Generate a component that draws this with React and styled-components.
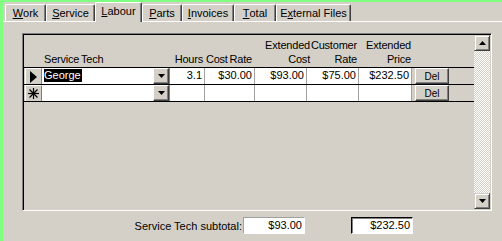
import React from 'react';
import styled, { createGlobalStyle } from 'styled-components';

const Global = createGlobalStyle`
  html, body { margin: 0; padding: 0; background: #d4d0c8; }
  body { font-family: "Liberation Sans", Arial, sans-serif; font-size: 11px; color: #000; }
`;

const Window = styled.div`
  width: 499px;
  height: 239px;
  border-left: 3px solid #80ff80;
  border-top: 2px solid #80ff80;
  background: #d4d0c8;
  display: flex;
  flex-direction: column;
  overflow: hidden;
`;

const TabStrip = styled.div`
  display: flex;
  align-items: flex-end;
  height: 19px;
  padding-left: 2px;
  position: relative;
  z-index: 1;
`;

const Tab = styled.div`
  box-sizing: border-box;
  width: ${p => p.$w}px;
  height: ${p => (p.$active ? 20 : 17)}px;
  margin-bottom: ${p => (p.$active ? -1 : 0)}px;
  padding-bottom: ${p => (p.$active ? 4 : 1)}px;
  background: #d4d0c8;
  border-top: 1px solid #fff;
  border-left: 1px solid #fff;
  border-right: 1px solid #404040;
  box-shadow: inset -1px 0 #808080;
  border-radius: 2px 2px 0 0;
  display: flex;
  align-items: center;
  justify-content: center;
  white-space: nowrap;
  position: relative;
  z-index: ${p => (p.$active ? 2 : 1)};
  u { text-decoration: underline; text-underline-offset: 1px; }
`;

const Body = styled.div`
  flex: 1;
  border-top: 1px solid #fff;
  padding: 11px 0 0 19px;
  display: flex;
  flex-direction: column;
`;

const Subform = styled.div`
  box-sizing: border-box;
  width: 470px;
  height: 178px;
  border: 1px solid;
  border-color: #808080 #fff #fff #808080;
  box-shadow: inset 1px 1px #000, inset -1px -1px #d4d0c8;
  padding: 1px;
  display: flex;
`;

const Sheet = styled.div`
  flex: 1;
  display: flex;
  flex-direction: column;
`;

const Header = styled.div`
  box-sizing: border-box;
  height: 32px;
  display: flex;
  align-items: flex-end;
  padding-bottom: 1px;
  letter-spacing: -0.2px;
  word-spacing: -1px;
`;

const HeadCell = styled.div`
  width: ${p => p.$w}px;
  flex: none;
  display: flex;
  flex-direction: column;
  align-items: ${p => (p.$left ? 'flex-start' : 'flex-end')};
  line-height: 14px;
  white-space: nowrap;
`;

const Rows = styled.div`
  border-bottom: 1px solid #000;
`;

const Row = styled.div`
  display: flex;
  height: 16px;
  border-top: 1px solid #000;
  padding-left: 1px;
`;

const Selector = styled.div`
  box-sizing: border-box;
  width: 17px;
  flex: none;
  background: #d4d0c8;
  border-top: 1px solid #fff;
  border-left: 1px solid #fff;
  border-right: 1px solid #808080;
  display: flex;
  align-items: center;
  justify-content: center;
`;

const Field = styled.div`
  box-sizing: border-box;
  width: ${p => p.$w}px;
  flex: none;
  background: #fff;
  border-right: 1px solid #a0a0a0;
  text-align: ${p => (p.$left ? 'left' : 'right')};
  padding: 0 2px;
  line-height: 15px;
  white-space: nowrap;
  overflow: hidden;
`;

const Combo = styled.div`
  box-sizing: border-box;
  width: 128px;
  flex: none;
  display: flex;
  background: #fff;
  border-right: 1px solid #808080;
`;

const ComboText = styled.div`
  flex: 1;
  padding: 1px 0 0 2px;
  line-height: 13px;
`;

const Highlight = styled.span`
  background: #000;
  color: #fff;
  padding: 0 1px 0 0;
  display: inline-block;
`;

const RaisedButton = styled.div`
  box-sizing: border-box;
  background: #d4d0c8;
  border: 1px solid;
  border-color: #fff #404040 #404040 #fff;
  box-shadow: inset -1px -1px #808080;
  display: flex;
  align-items: center;
  justify-content: center;
  flex: none;
`;

const DropButton = styled(RaisedButton)`
  width: 16px;
  height: 16px;
`;

const Gap = styled.div`
  width: ${p => p.$w}px;
  flex: none;
`;

const DelButton = styled(RaisedButton)`
  width: 34px;
  height: 16px;
  font-size: 10px;
`;

const ScrollBar = styled.div`
  width: 16px;
  flex: none;
  display: flex;
  flex-direction: column;
`;

const ScrollButton = styled(RaisedButton)`
  width: 16px;
  height: 16px;
  border-color: #d4d0c8 #404040 #404040 #d4d0c8;
  box-shadow: inset 1px 1px #fff, inset -1px -1px #808080;
`;

const Track = styled.div`
  flex: 1;
  background: repeating-conic-gradient(#fff 0 25%, #d4d0c8 0 50%) 0 0 / 2px 2px;
`;

const SubtotalRow = styled.div`
  display: flex;
  align-items: center;
  margin-top: 6px;
  height: 17px;
`;

const SubLabel = styled.div`
  width: 221px;
  text-align: right;
  padding-right: 1px;
  box-sizing: border-box;
  white-space: nowrap;
`;

const TotalBox = styled.div`
  box-sizing: border-box;
  width: 62px;
  height: 17px;
  background: #fff;
  text-align: right;
  padding-right: 2px;
  line-height: 15px;
  margin-left: ${p => p.$ml || 0}px;
  border: 1px solid;
  ${p => p.$sunken
    ? 'border-color: #000 #fff #fff #000; box-shadow: inset 1px 1px #808080;'
    : 'border-color: #a0a0a0 #fff #fff #a0a0a0;'}
`;

const Arrow = ({ dir }) => {
  const pts = {
    down: '0,0 7,0 3.5,4',
    up: '0,4 7,4 3.5,0',
  }[dir];
  return (
    <svg width="7" height="4" viewBox="0 0 7 4" style={{ display: 'block' }}>
      <polygon points={pts} fill="#000" />
    </svg>
  );
};

const Pointer = () => (
  <svg width="7" height="12" viewBox="0 0 7 12" style={{ display: 'block' }}>
    <polygon points="0,0 7,6 0,12" fill="#000" />
  </svg>
);

const NewStar = () => (
  <svg width="11" height="11" viewBox="0 0 11 11" style={{ display: 'block' }}>
    <g stroke="#000" strokeWidth="1.2">
      <line x1="5.5" y1="0" x2="5.5" y2="11" />
      <line x1="0" y1="5.5" x2="11" y2="5.5" />
      <line x1="1.5" y1="1.5" x2="9.5" y2="9.5" />
      <line x1="9.5" y1="1.5" x2="1.5" y2="9.5" />
    </g>
  </svg>
);

const tabs = [
  { w: 41, node: <><u>W</u>ork</> },
  { w: 49, node: <><u>S</u>ervice</> },
  { w: 47, node: <><u>L</u>abour</>, active: true },
  { w: 40, node: <><u>P</u>arts</> },
  { w: 52, node: <><u>I</u>nvoices</> },
  { w: 42, node: <><u>T</u>otal</> },
  { w: 75, node: <>E<u>x</u>ternal Files</> },
];

const rows = [
  { current: true, tech: 'George', hours: '3.1', cost: '$30.00', ext: '$93.00', rate: '$75.00', price: '$232.50' },
  { current: false, tech: '', hours: '', cost: '', ext: '', rate: '', price: '' },
];

export default function App() {
  return (
    <>
      <Global />
      <Window>
        <TabStrip>
          {tabs.map((t, i) => (
            <Tab key={i} $w={t.w} $active={t.active}>{t.node}</Tab>
          ))}
        </TabStrip>
        <Body>
          <Subform>
            <Sheet>
              <Header>
                <Gap $w={20} />
                <HeadCell $w={126} $left>Service Tech</HeadCell>
                <HeadCell $w={33}>Hours</HeadCell>
                <HeadCell $w={49}>Cost Rate</HeadCell>
                <HeadCell $w={58}><span>Extended</span><span>Cost</span></HeadCell>
                <HeadCell $w={47}><span>Customer</span><span>Rate</span></HeadCell>
                <HeadCell $w={54}><span>Extended</span><span>Price</span></HeadCell>
              </Header>
              <Rows>
                {rows.map((r, i) => (
                  <Row key={i}>
                    <Selector>{r.current ? <Pointer /> : <NewStar />}</Selector>
                    <Combo>
                      <ComboText>{r.tech && <Highlight>{r.tech}</Highlight>}</ComboText>
                      <DropButton><Arrow dir="down" /></DropButton>
                    </Combo>
                    <Field $w={35}>{r.hours}</Field>
                    <Field $w={50}>{r.cost}</Field>
                    <Field $w={52}>{r.ext}</Field>
                    <Field $w={52}>{r.rate}</Field>
                    <Field $w={53}>{r.price}</Field>
                    <Gap $w={3} />
                    <DelButton>Del</DelButton>
                  </Row>
                ))}
              </Rows>
            </Sheet>
            <ScrollBar>
              <ScrollButton><Arrow dir="up" /></ScrollButton>
              <Track />
              <ScrollButton><Arrow dir="down" /></ScrollButton>
            </ScrollBar>
          </Subform>
          <SubtotalRow>
            <SubLabel>Service Tech subtotal:</SubLabel>
            <TotalBox>$93.00</TotalBox>
            <TotalBox $ml={46} $sunken>$232.50</TotalBox>
          </SubtotalRow>
        </Body>
      </Window>
    </>
  );
}
